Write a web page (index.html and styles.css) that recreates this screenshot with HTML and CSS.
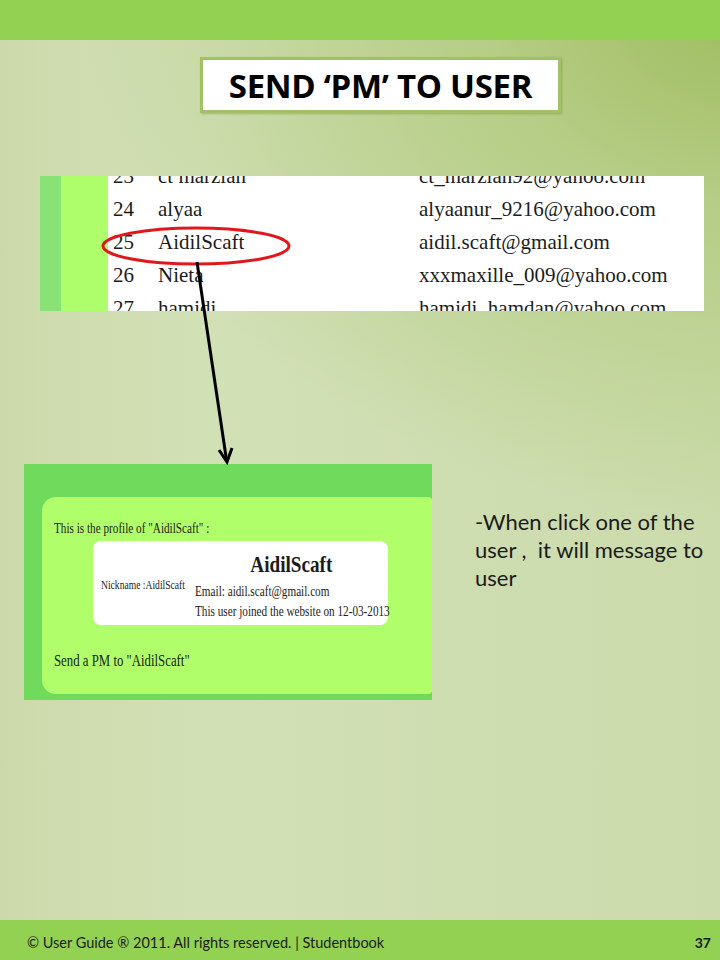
FILE: index.html
```html
<!DOCTYPE html>
<html>
<head>
<meta charset="utf-8">
<link rel="stylesheet" href="styles.css">
</head>
<body>
<div class="slide">
  <header class="topbar"></header>
  <main class="content">
    <div class="title">SEND ‘PM’ TO USER</div>

    <div class="table-shot">
      <div class="strip-a"></div>
      <div class="strip-b"></div>
      <div class="sheet">
        <div class="rows">
          <div class="row"><span class="num">23</span><span class="name">ct marzian</span><span class="mail">ct_marzian92@yahoo.com</span></div>
          <div class="row"><span class="num">24</span><span class="name">alyaa</span><span class="mail">alyaanur_9216@yahoo.com</span></div>
          <div class="row"><span class="num">25</span><span class="name">AidilScaft</span><span class="mail">aidil.scaft@gmail.com</span></div>
          <div class="row"><span class="num">26</span><span class="name">Nieta</span><span class="mail">xxxmaxille_009@yahoo.com</span></div>
          <div class="row"><span class="num">27</span><span class="name">hamidi</span><span class="mail">hamidi_hamdan@yahoo.com</span></div>
        </div>
      </div>
    </div>

    <div class="lower">
      <div class="profile">
        <div class="profile-inner">
          <p class="intro"><span class="sx">This is the profile of "AidilScaft" :</span></p>
          <div class="card">
            <div class="card-left"><span class="sx">Nickname :AidilScaft</span></div>
            <div class="card-right">
              <h2 class="uname"><span class="sx">AidilScaft</span></h2>
              <p class="line"><span class="sx">Email: aidil.scaft@gmail.com</span></p>
              <p class="line"><span class="sx">This user joined the website on 12-03-2013</span></p>
            </div>
          </div>
          <p class="sendpm"><span class="sx">Send a PM to "AidilScaft"</span></p>
        </div>
      </div>
      <p class="note">-When click one of the user ,&nbsp; it will message to user</p>
    </div>

    <svg class="overlay" width="720" height="880" viewBox="0 40 720 880">
      <ellipse cx="196" cy="246" rx="93" ry="18" fill="none" stroke="#e0181b" stroke-width="3"/>
      <line x1="197" y1="262" x2="226.5" y2="460" stroke="#000" stroke-width="3"/>
      <path d="M219 450 L227 462 L232 448" fill="none" stroke="#000" stroke-width="3" stroke-linejoin="miter"/>
    </svg>
  </main>
  <footer class="footer">
    <span class="copy">© User Guide ® 2011. All rights reserved. | Studentbook</span>
    <span class="page">37</span>
  </footer>
</div>
</body>
</html>
```
FILE: styles.css
```css
* { box-sizing: border-box; }
html, body { margin: 0; padding: 0; }
body { width: 720px; height: 960px; overflow: hidden; }

.slide {
  width: 720px;
  height: 960px;
  display: flex;
  flex-direction: column;
}

.topbar {
  height: 40px;
  background: #93d152;
  flex: none;
}

.content {
  position: relative;
  flex: 1;
  display: flex;
  flex-direction: column;
  align-items: flex-start;
  background:
    radial-gradient(ellipse 900px 700px at 105% -5%, #9dbb5c 0%, #b5cd85 30%, rgba(206,221,172,0) 75%),
    linear-gradient(90deg, #ccdaab 0%, #d2e0b6 30%, #cbdbab 100%);
}

.title {
  margin: 17px 0 0 200px;
  width: 361px;
  height: 56px;
  background: #fff;
  border: 3px solid #a1c264;
  box-shadow: 1px 1px 2px rgba(90,110,40,0.35);
  display: flex;
  align-items: center;
  justify-content: center;
  font-family: "Open Sans", "Liberation Sans", sans-serif;
  font-weight: 700;
  font-size: 33px;
  letter-spacing: -0.3px;
  color: #000;
}

.table-shot {
  margin: 63px 0 0 40px;
  width: 664px;
  height: 135px;
  display: flex;
  overflow: hidden;
}
.strip-a { width: 21px; background: #89e276; }
.strip-b { width: 47px; background: #adfe6a; }
.sheet {
  flex: 1;
  background: #fff;
  overflow: hidden;
  font-family: "Liberation Serif", serif;
  font-size: 21px;
  color: #1c1c1c;
}
.rows { margin-top: -16px; }
.row {
  height: 33px;
  line-height: 33px;
  display: flex;
  white-space: nowrap;
}
.num { width: 50px; padding-left: 5px; }
.name { width: 261px; }
.mail { flex: 1; }

.lower {
  margin-top: 153px;
  display: flex;
  align-items: flex-start;
}

.profile {
  margin-left: 24px;
  width: 408px;
  height: 236px;
  background: #70da5c;
  padding: 33px 0 6px 18px;
  display: flex;
  flex: none;
}
.profile-inner {
  flex: 1;
  background: #b0ff6a;
  border-radius: 14px 4px 4px 14px;
  padding: 24px 0 0 12px;
  font-family: "Liberation Serif", serif;
  color: #1b1b1b;
}
.sx {
  display: inline-block;
  transform: scaleX(0.8);
  transform-origin: left center;
  white-space: nowrap;
}
.intro {
  margin: 0;
  font-size: 14px;
  line-height: 16px;
}
.card {
  margin: 4px 0 0 39px;
  width: 295px;
  height: 84px;
  background: #fff;
  border-radius: 8px;
  display: flex;
  align-items: center;
}
.card-left {
  flex: none;
  width: 102px;
  min-width: 0;
  padding-left: 8px;
  padding-top: 4px;
  font-size: 12px;
}
.card-right {
  flex: 1;
  min-width: 0;
  font-size: 14px;
  padding-top: 6px;
}
.uname {
  margin: 0 0 4px;
  text-align: center;
  font-size: 24px;
  line-height: 28px;
  font-weight: 700;
}
.uname .sx { transform-origin: center center; }
.line { margin: 0; line-height: 20px; }
.sendpm {
  margin: 26px 0 0;
  font-size: 16px;
  line-height: 20px;
}

.note {
  margin: 44px 0 0 43px;
  width: 242px;
  font-family: "Lato", "Open Sans", sans-serif;
  font-size: 22px;
  line-height: 28px;
  color: #1a1a1a;
}

.overlay {
  position: absolute;
  left: 0;
  top: 0;
  pointer-events: none;
}

.footer {
  height: 40px;
  flex: none;
  background: #93d152;
  display: flex;
  align-items: center;
  justify-content: space-between;
  padding: 4px 9px 0 27px;
  font-family: "Lato", "Open Sans", sans-serif;
  color: #1a1a1a;
}
.copy { font-size: 14.5px; }
.page { font-size: 14px; font-weight: 700; }
```
